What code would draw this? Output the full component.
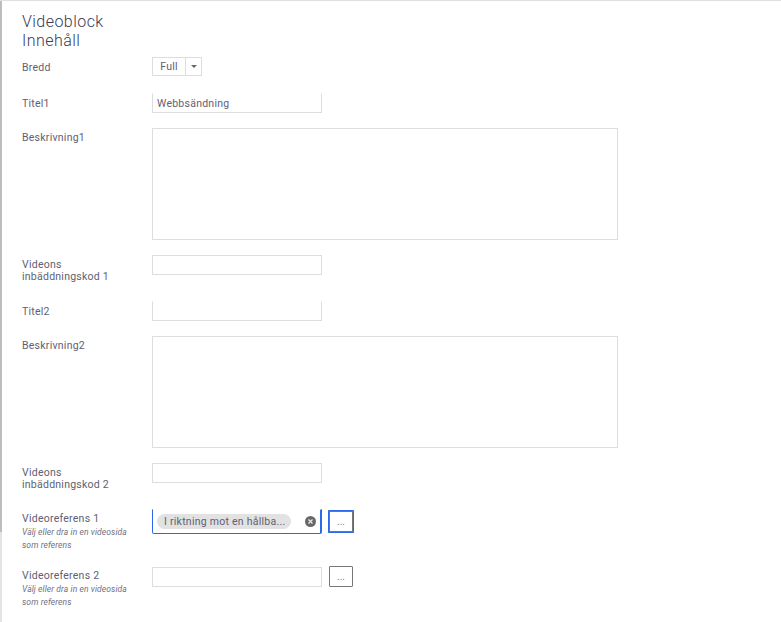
<div class="page">
  <h1>Videoblock<br />Innehåll</h1>

  <div class="row r-bredd">
    <span class="label">Bredd</span>
    <div class="select">
      <span class="sel-val">Full</span>
      <span class="sel-arrow"><i></i></span>
    </div>
  </div>

  <div class="row r-titel">
    <span class="label">Titel1</span>
    <div class="input notop">Webbsändning</div>
  </div>

  <div class="row r-area">
    <span class="label">Beskrivning1</span>
    <div class="area"></div>
  </div>

  <div class="row r-code">
    <span class="label two">Videons<br />inbäddningskod 1</span>
    <div class="input"></div>
  </div>

  <div class="row r-titel">
    <span class="label">Titel2</span>
    <div class="input notop"></div>
  </div>

  <div class="row r-area">
    <span class="label">Beskrivning2</span>
    <div class="area"></div>
  </div>

  <div class="row r-code">
    <span class="label two">Videons<br />inbäddningskod 2</span>
    <div class="input"></div>
  </div>

  <div class="row r-ref1">
    <div class="label">
      Videoreferens 1
      <small>Välj eller dra in en videosida som referens</small>
    </div>
    <div class="picker">
      <div class="input focus">
        <span class="chip">I riktning mot en hållba...</span>
        <svg class="clear" width="11" height="11" viewBox="0 0 11 11">
          <circle cx="5.5" cy="5.5" r="5.5" fill="#686868" />
          <path d="M3.5 3.5l4 4M7.5 3.5l-4 4" stroke="#e4e4e4" stroke-width="1.4" />
        </svg>
      </div>
      <button class="dots active">...</button>
    </div>
  </div>

  <div class="row">
    <div class="label">
      Videoreferens 2
      <small>Välj eller dra in en videosida som referens</small>
    </div>
    <div class="picker">
      <div class="input"></div>
      <button class="dots">...</button>
    </div>
  </div>
</div>

<style>
  :global(body) {
    margin: 0;
    background: #fff;
  }

  .page {
    box-sizing: border-box;
    width: 781px;
    height: 622px;
    overflow: hidden;
    padding: 11px 0 0 22px;
    border-top: 1px solid #e0e0e0;
    /* the strip on the left gets lighter near the bottom */
    background:
      linear-gradient(#bdbdbd, #bdbdbd) 0 0 / 2px 531px no-repeat,
      linear-gradient(#e4e4e4, #e4e4e4) 0 0 / 2px 100% no-repeat;
    font-family: Roboto, "Liberation Sans", sans-serif;
    color: #606074;
  }

  h1 {
    margin: 0 0 7px;
    font-size: 16px;
    font-weight: 300;
    line-height: 19px;
    letter-spacing: 0.45px;
    color: #3a3a55;
  }

  .row {
    display: grid;
    grid-template-columns: 130px 1fr;
    align-items: start;
  }

  .r-bredd { margin-bottom: 17px; }
  .r-titel { margin-bottom: 15px; }
  .r-area { margin-bottom: 15px; }
  .r-code { margin-bottom: 18px; }
  .r-ref1 { margin-bottom: 15px; }

  .label {
    font-size: 10.5px;
    line-height: 12px;
    letter-spacing: 0.25px;
    padding-top: 4px;
  }

  .r-bredd .label,
  .r-titel .label {
    padding-top: 5px;
  }

  small {
    display: block;
    width: 118px;
    margin-top: 1px;
    font-size: 8.5px;
    font-style: italic;
    line-height: 12.5px;
    letter-spacing: 0.1px;
    color: #6f6f80;
  }

  .select {
    display: flex;
    width: 50px;
    height: 19px;
    box-sizing: border-box;
    border: 1px solid #ddd;
    font-size: 10.5px;
    line-height: 18px;
    letter-spacing: 0.25px;
  }

  .sel-val {
    width: 32px;
    text-align: center;
    border-right: 1px solid #ddd;
  }

  .sel-arrow {
    flex: 1;
    display: flex;
    align-items: center;
    justify-content: center;
  }

  .sel-arrow i {
    border: 3px solid transparent;
    border-top: 3px solid #666;
    border-bottom: 0;
  }

  .input {
    box-sizing: border-box;
    width: 170px;
    height: 20px;
    padding-left: 4px;
    border: 1px solid #ddd;
    font-size: 10.5px;
    line-height: 19px;
    letter-spacing: 0.25px;
  }

  .notop {
    border-top-color: #fff;
  }

  .area {
    box-sizing: border-box;
    width: 466px;
    height: 112px;
    border: 1px solid #ddd;
  }

  .picker {
    display: flex;
    align-items: center;
    gap: 7px;
  }

  .input.focus {
    display: flex;
    align-items: center;
    justify-content: space-between;
    height: 25px;
    padding: 0 4px 0 4px;
    border: 1px solid #2a6ae8;
    border-top-color: #fff;
    border-right-width: 2px;
    border-radius: 0 0 2px 2px;
  }

  .chip {
    height: 15px;
    padding: 0 6px 0 7px;
    border-radius: 8px;
    background: #e2e2e2;
    font-size: 10.5px;
    line-height: 15px;
    white-space: nowrap;
  }

  .dots {
    box-sizing: border-box;
    width: 24px;
    height: 21px;
    padding: 0;
    background: #fff;
    border: 1px solid #777;
    border-radius: 1px;
    font: 10px/19px Roboto, "Liberation Sans", sans-serif;
    color: #777;
  }

  .dots.active {
    width: 26px;
    height: 23px;
    margin-left: -1px;
    border: 2px solid #777;
    outline: 1px solid #2a6ae8;
    outline-offset: -1px;
  }
</style>
